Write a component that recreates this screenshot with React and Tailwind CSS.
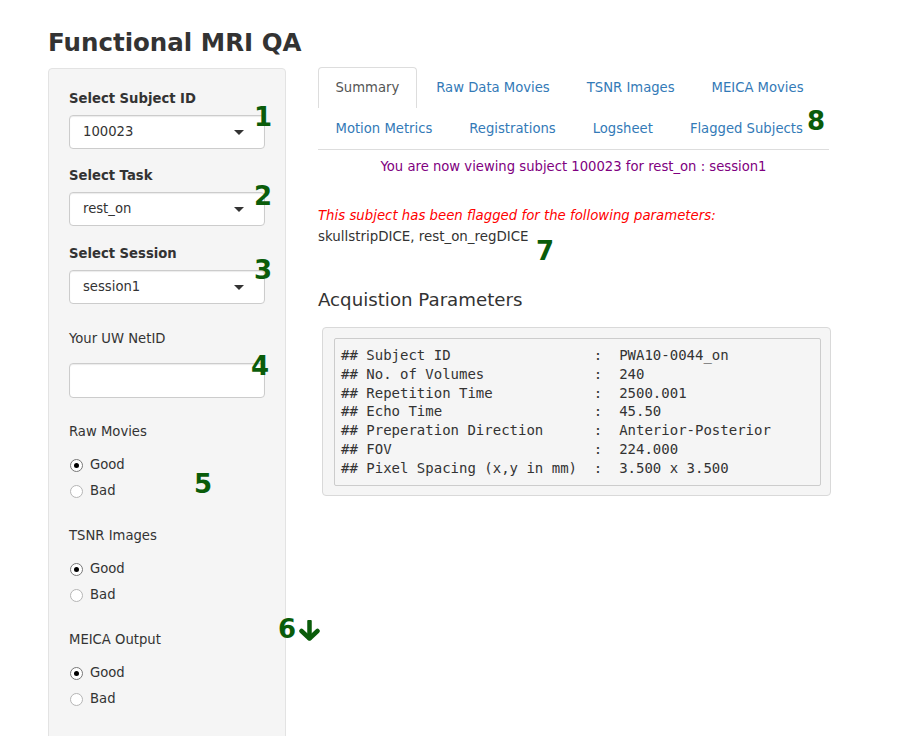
import React from 'react';

const sans = { fontFamily: '"DejaVu Sans", "Noto Sans", sans-serif' };

const params = [
  ['## Subject ID', 'PWA10-0044_on'],
  ['## No. of Volumes', '240'],
  ['## Repetition Time', '2500.001'],
  ['## Echo Time', '45.50'],
  ['## Preperation Direction', 'Anterior-Posterior'],
  ['## FOV', '224.000'],
  ['## Pixel Spacing (x,y in mm)', '3.500 x 3.500'],
];

function Select({ value }) {
  return (
    <div className="mt-[6px] h-[34px] bg-white border border-[#cccccc] rounded-[4px] shadow-[inset_0_1px_1px_rgba(0,0,0,0.08)] flex items-center justify-between pl-[13px] pr-[20px] text-[13.2px] text-[#333]">
      <span>{value}</span>
      <span className="w-0 h-0 border-l-[5px] border-r-[5px] border-t-[5px] border-l-transparent border-r-transparent border-t-[#333]" />
    </div>
  );
}

function Radio({ label, checked, first }) {
  return (
    <div className={`${first ? 'mt-[13px]' : 'mt-[6px]'} h-[20px] flex items-center text-[13.2px] text-[#333]`}>
      <span
        className={`ml-[1px] w-[13px] h-[13px] rounded-full bg-white border flex items-center justify-center ${
          checked ? 'border-[#777]' : 'border-[#b5b5b5]'
        }`}
      >
        {checked && <span className="w-[5px] h-[5px] rounded-full bg-black" />}
      </span>
      <span className="ml-[7px]">{label}</span>
    </div>
  );
}

function RadioGroup({ title, top }) {
  return (
    <div className={top}>
      <div className="h-[20px] leading-[20px] text-[13.2px] text-[#333]">{title}</div>
      <Radio label="Good" checked first />
      <Radio label="Bad" />
    </div>
  );
}

function Tab({ label, active }) {
  return (
    <div
      className={`mr-[2px] h-[41px] px-[16.5px] flex items-center text-[13.2px] rounded-t-[4px] border border-b-0 ${
        active ? 'bg-white border-[#dddddd] text-[#555]' : 'border-transparent text-[#337ab7]'
      }`}
    >
      {label}
    </div>
  );
}

function Mark({ children, className }) {
  return (
    <div className={`absolute text-[26px] leading-none font-bold text-[#0a5c0a] ${className}`}>
      {children}
    </div>
  );
}

export default function App() {
  return (
    <div className="relative w-[900px] h-[736px] overflow-hidden bg-white text-[#333]" style={sans}>
      <div className="pt-[29px] pl-[48px]">
        <h2 className="h-[27px] leading-[27px] text-[24.5px] font-bold text-[#333] mb-[11px]">
          Functional MRI QA
        </h2>

        <div className="flex items-start">
          {/* sidebar */}
          <div className="mt-[1px] w-[238px] h-[700px] bg-[#f5f5f5] border border-[#e3e3e3] rounded-[4px] pt-[20px] px-[20px]">
            <div className="h-[20px] leading-[20px] text-[13.2px] font-bold">Select Subject ID</div>
            <Select value="100023" />

            <div className="mt-[17px] h-[20px] leading-[20px] text-[13.2px] font-bold">Select Task</div>
            <Select value="rest_on" />

            <div className="mt-[18px] h-[20px] leading-[20px] text-[13.2px] font-bold">Select Session</div>
            <Select value="session1" />

            <div className="mt-[25px] h-[20px] leading-[20px] text-[13.2px]">Your UW NetID</div>
            <div className="mt-[14px] h-[35px] bg-white border border-[#cccccc] rounded-[4px] shadow-[inset_0_1px_1px_rgba(0,0,0,0.08)]" />

            <RadioGroup title="Raw Movies" top="mt-[24px]" />
            <RadioGroup title="TSNR Images" top="mt-[25px]" />
            <RadioGroup title="MEICA Output" top="mt-[25px]" />
          </div>

          {/* main panel */}
          <div className="ml-[32px] w-[511px]">
            <div className="border-b border-[#dddddd]">
              <div className="flex">
                <Tab label="Summary" active />
                <Tab label="Raw Data Movies" />
                <Tab label="TSNR Images" />
                <Tab label="MEICA Movies" />
              </div>
              <div className="flex">
                <Tab label="Motion Metrics" />
                <Tab label="Registrations" />
                <Tab label="Logsheet" />
                <Tab label="Flagged Subjects" />
              </div>
            </div>

            <div className="mt-[7px] h-[20px] leading-[20px] text-center text-[13.2px] text-[#800080]">
              You are now viewing subject 100023 for rest_on : session1
            </div>

            <div className="mt-[29px] h-[20px] leading-[20px] text-[13.3px] italic text-[#ff0000]">
              This subject has been flagged for the following parameters:
            </div>
            <div className="mt-[1px] h-[20px] leading-[20px] text-[13.4px] text-[#333]">
              skullstripDICE, rest_on_regDICE
            </div>

            <h4 className="mt-[43px] h-[20px] leading-[20px] text-[18.2px] text-[#333]">
              Acquistion Parameters
            </h4>

            <div className="mt-[17px] ml-[4px] w-[509px] bg-[#f5f5f5] border border-[#d9d9d9] rounded-[4px] pt-[10px] pb-[9px] pl-[11px] pr-[9px]">
              <pre
                className="bg-[#f5f5f5] border border-[#cccccc] rounded-[2px] pt-[7px] pb-[7px] pl-[6px] text-[14px] leading-[18.8px] text-[#333] whitespace-pre"
                style={{ fontFamily: '"DejaVu Sans Mono", "Liberation Mono", monospace' }}
              >
                {params.map(([k, v]) => k.padEnd(30) + ':  ' + v).join('\n')}
              </pre>
            </div>
          </div>
        </div>
      </div>

      {/* annotation marks */}
      <Mark className="left-[254px] top-[104px]">1</Mark>
      <Mark className="left-[254px] top-[183px]">2</Mark>
      <Mark className="left-[254px] top-[257px]">3</Mark>
      <Mark className="left-[251px] top-[353px]">4</Mark>
      <Mark className="left-[194px] top-[471px]">5</Mark>
      <Mark className="left-[278px] top-[616px]">6</Mark>
      <svg className="absolute left-[299px] top-[620px]" width="21" height="21" viewBox="0 0 21 21">
        <path d="M10.5 1.5 V18" stroke="#0a5c0a" strokeWidth="4.5" strokeLinecap="round" fill="none" />
        <path d="M2.5 11 L10.5 18.5 L18.5 11" stroke="#0a5c0a" strokeWidth="4.5" strokeLinecap="round" strokeLinejoin="round" fill="none" />
      </svg>
      <Mark className="left-[536px] top-[238px]">7</Mark>
      <Mark className="left-[807px] top-[108px]">8</Mark>
    </div>
  );
}
